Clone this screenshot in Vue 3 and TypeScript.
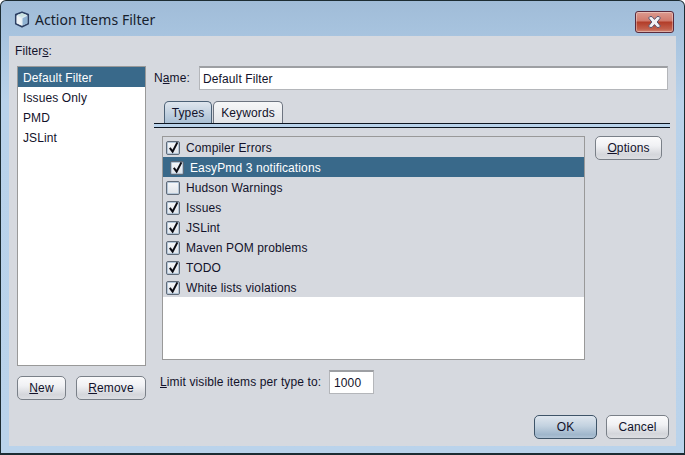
<script setup lang="ts">
import { ref } from 'vue';

const filters = ['Default Filter', 'Issues Only', 'PMD', 'JSLint'];
const selectedFilter = ref('Default Filter');

interface ActionType {
  label: string;
  checked: boolean;
  selected?: boolean;
}

const types = ref<ActionType[]>([
  { label: 'Compiler Errors', checked: true },
  { label: 'EasyPmd 3 notifications', checked: true, selected: true },
  { label: 'Hudson Warnings', checked: false },
  { label: 'Issues', checked: true },
  { label: 'JSLint', checked: true },
  { label: 'Maven POM problems', checked: true },
  { label: 'TODO', checked: true },
  { label: 'White lists violations', checked: true }
]);
</script>

<template>
  <div class="window">
    <header class="titlebar">
      <svg class="app-icon" width="16" height="17" viewBox="0 0 16 17">
        <path d="M8 1.2 L14.2 3.6 V12.8 L8 15.8 L1.8 12.8 V3.6 Z" fill="#dbe8f0" stroke="#2c3f63" stroke-width="1.7" stroke-linejoin="round" />
        <path d="M8.6 7.2 L13.4 4.8 V12.2 L8.6 14.6 Z" fill="#8fb2d2" />
        <path d="M2.6 4.8 L7.6 7.2 V14.6 L2.6 12.2 Z" fill="#eef3f6" />
        <path d="M3.4 3.8 L8 2.2 L12.6 3.8 L8 5.9 Z" fill="#c9e2e0" />
      </svg>
      <span class="title">Action Items Filter</span>
      <button class="close" type="button" aria-label="Close">
        <svg width="15" height="14" viewBox="0 0 15 14">
          <path d="M2.8 1.6 H5 L7.5 4.4 L10 1.6 H12.2 L13.4 3 L10.2 7 L13.4 11 L12.2 12.4 H10 L7.5 9.6 L5 12.4 H2.8 L1.6 11 L4.8 7 L1.6 3 Z" fill="#f2f3f6" stroke="#55506a" stroke-width="1" stroke-linejoin="round" />
        </svg>
      </button>
    </header>

    <main class="panel">
      <div class="columns">
        <aside class="left">
          <label class="filters-label">Filter<u>s</u>:</label>
          <ul class="filter-list">
            <li
              v-for="f in filters"
              :key="f"
              :class="{ active: f === selectedFilter }"
              @click="selectedFilter = f"
            >{{ f }}</li>
          </ul>
          <div class="left-buttons">
            <button class="btn new" type="button"><u>N</u>ew</button>
            <button class="btn remove" type="button"><u>R</u>emove</button>
          </div>
        </aside>

        <section class="right">
          <div class="name-row">
            <label>N<u>a</u>me:</label>
            <input class="name-input" type="text" value="Default Filter" />
          </div>

          <div class="tabs">
            <div class="tab current">Types</div>
            <div class="tab">Keywords</div>
          </div>
          <div class="tab-rule"></div>

          <div class="types-row">
            <div class="types-list">
              <label
                v-for="t in types"
                :key="t.label"
                class="type-item"
                :class="{ selected: t.selected }"
              >
                <span class="check">
                  <svg v-if="t.checked" width="14" height="14" viewBox="0 0 14 14">
                    <path d="M3.8 6.9 L6.6 10.6 L11.4 1.4" fill="none" stroke="#0c0c14" stroke-width="2" />
                  </svg>
                </span>
                <span>{{ t.label }}</span>
              </label>
            </div>
            <button class="btn options" type="button"><u>O</u>ptions</button>
          </div>

          <div class="limit-row">
            <label><u>L</u>imit visible items per type to:</label>
            <input class="limit-input" type="text" value="1000" />
          </div>
        </section>
      </div>

      <footer class="footer">
        <button class="btn ok" type="button">OK</button>
        <button class="btn cancel" type="button">Cancel</button>
      </footer>
    </main>
  </div>
</template>

<style>
html, body {
  margin: 0;
  overflow: hidden;
  background: #fff;
}
</style>

<style scoped>
.window {
  box-sizing: border-box;
  width: 685px;
  height: 455px;
  display: flex;
  flex-direction: column;
  padding: 0 8px 7px 8px;
  border: 1px solid #1c2c33;
  border-bottom-width: 2px;
  border-radius: 6px 6px 0 0;
  background: linear-gradient(180deg, #a0bcd8 0, #a8c4df 36px, #b9d2ea 100px, #bad3eb 100%);
  font-family: "Liberation Sans", Arial, sans-serif;
  font-size: 12px;
  letter-spacing: 0.12px;
  color: #12122a;
}

.titlebar {
  height: 35px;
  flex: none;
  display: flex;
  align-items: center;
  margin-left: 5px;
}

.app-icon {
  margin: 2px 0 0 0;
}

.title {
  margin-left: 5px;
  padding-top: 2px;
  font-family: "Noto Sans", sans-serif;
  font-size: 14px;
  letter-spacing: 0.05px;
  color: #16202c;
}

.close {
  width: 39px;
  height: 22px;
  margin: 7px 2px 0 auto;
  padding: 0;
  display: flex;
  align-items: center;
  justify-content: center;
  border: 1px solid #5a2a3c;
  border-radius: 3px;
  background: linear-gradient(180deg, #dc9a8f 0, #d07a6c 45%, #b23c28 50%, #c2604c 85%, #d08878 100%);
  box-shadow: inset 0 0 0 1px rgba(255, 255, 255, 0.35);
}

.panel {
  flex: 1;
  min-height: 0;
  display: flex;
  flex-direction: column;
  background: #d6d9df;
  padding: 8px 7px 7px 8px;
}

.columns {
  display: flex;
  gap: 8px;
}

.left {
  width: 129px;
  flex: none;
  display: flex;
  flex-direction: column;
}

.filters-label {
  height: 14px;
  line-height: 14px;
  margin-left: -2px;
}

.filter-list {
  list-style: none;
  box-sizing: border-box;
  height: 300px;
  margin: 8px 0 0;
  padding: 0;
  background: #fff;
  border: 1px solid #999;
}

.filter-list li {
  box-sizing: border-box;
  height: 20px;
  line-height: 20px;
  padding: 1px 0 0 5px;
}

.filter-list li.active {
  background: #39698a;
  color: #fff;
}

.left-buttons {
  display: flex;
  justify-content: space-between;
  margin-top: 10px;
}

.btn {
  box-sizing: border-box;
  height: 24px;
  padding: 0;
  font-family: inherit;
  font-size: 12px;
  letter-spacing: inherit;
  color: #12122a;
  border: 1px solid #7a8088;
  border-radius: 5px;
  background: linear-gradient(180deg, #fbfbfc 0, #f0f1f4 40%, #d4d6db 80%, #dcdee2 100%);
}

.new {
  width: 49px;
}

.remove {
  width: 70px;
}

.right {
  flex: 1;
  min-width: 0;
  display: flex;
  flex-direction: column;
  padding-top: 22px;
}

.name-row {
  display: flex;
  align-items: center;
  height: 24px;
}

.name-row label {
  width: 45px;
}

.name-input,
.limit-input {
  box-sizing: border-box;
  height: 24px;
  padding: 0 3px;
  font-family: inherit;
  font-size: 12px;
  letter-spacing: inherit;
  color: #12122a;
  background: #fff;
  border: 1px solid #b4b6ba;
  border-top: 2px solid #9d9fa3;
  border-radius: 0;
  outline: none;
}

.name-input {
  width: 469px;
}

.tabs {
  display: flex;
  gap: 1px;
  height: 22px;
  margin: 11px 0 0 10px;
}

.tab {
  box-sizing: border-box;
  width: 70px;
  line-height: 23px;
  text-align: center;
  border: 1px solid #6d7480;
  border-bottom: none;
  border-radius: 5px 5px 0 0;
  background: linear-gradient(180deg, #f6f7f8 0, #e2e4e8 100%);
}

.tab.current {
  width: 48px;
  background: linear-gradient(180deg, #dfe6ee 0, #a9bfd4 100%);
  border-color: #4c6176;
}

.tab-rule {
  box-sizing: border-box;
  height: 5px;
  width: 516px;
  border-top: 1px solid #0c1420;
  border-bottom: 1px solid #0c1420;
  background: #b9d2ea;
}

.types-row {
  display: flex;
  align-items: flex-start;
  gap: 10px;
  margin-top: 8px;
  padding-left: 8px;
}

.types-list {
  box-sizing: border-box;
  width: 423px;
  height: 224px;
  flex: none;
  background: #fff;
  border: 1px solid #999;
}

.type-item {
  box-sizing: border-box;
  height: 20px;
  display: flex;
  align-items: center;
  gap: 6px;
  padding: 1px 0 0 3px;
  background: #d6d9df;
}

.type-item.selected {
  background: #39698a;
  color: #fff;
  padding-left: 7px;
}

.check {
  box-sizing: border-box;
  width: 14px;
  height: 14px;
  flex: none;
  display: block;
  border: 1px solid #5f6a78;
  border-radius: 2px;
  background: linear-gradient(180deg, #f6f7f9 0, #dfe4ea 100%);
  box-shadow: inset 0 0 0 1px #b4c6d8;
}

.check svg {
  display: block;
  margin: -1px;
}

.options {
  width: 67px;
}

.limit-row {
  display: flex;
  align-items: center;
  margin-top: 10px;
  padding-left: 6px;
}

.limit-row label {
  width: 169px;
}

.limit-input {
  width: 45px;
  padding-left: 4px;
}

.footer {
  display: flex;
  justify-content: flex-end;
  gap: 9px;
  margin-top: 15px;
}

.ok,
.cancel {
  width: 63px;
}

.ok {
  border-color: #3e5468;
  background: linear-gradient(180deg, #dfe6ee 0, #c3d2e0 45%, #9fb6cb 85%, #aec2d4 100%);
}
</style>
